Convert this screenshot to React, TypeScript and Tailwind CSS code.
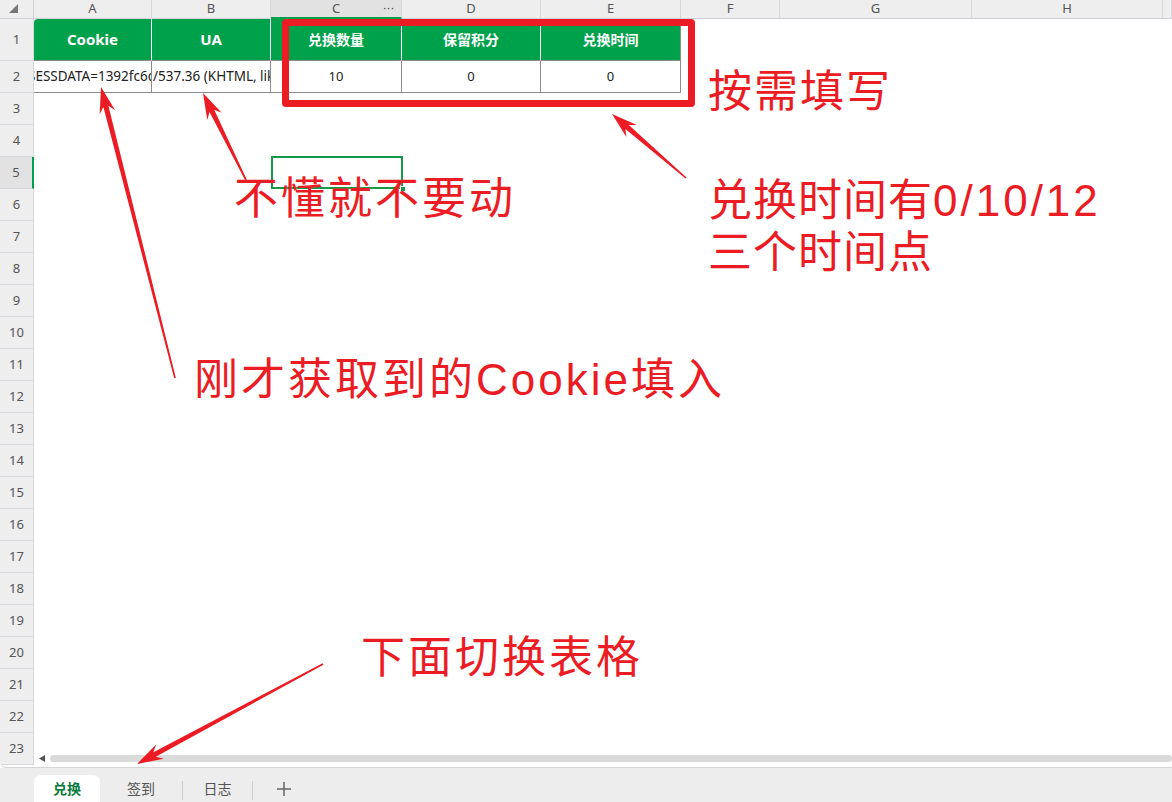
import React from 'react';

const RED = '#ec1c24';

const cols = [
  { k: 'A', w: 118 },
  { k: 'B', w: 119 },
  { k: 'C', w: 131 },
  { k: 'D', w: 139 },
  { k: 'E', w: 140 },
  { k: 'F', w: 99 },
  { k: 'G', w: 192 },
  { k: 'H', w: 191 },
  { k: '', w: 9 },
];

const rows = Array.from({ length: 23 }, (_, i) => i + 1);

const headerRow = ['Cookie', 'UA', '兑换数量', '保留积分', '兑换时间'];

// 箭头：尾部细，头部粗，再加一个三角箭头
function arrowPoints(x1: number, y1: number, x2: number, y2: number) {
  const dx = x2 - x1;
  const dy = y2 - y1;
  const len = Math.hypot(dx, dy);
  const ux = dx / len;
  const uy = dy / len;
  const px = -uy;
  const py = ux;
  const head = 26;
  const bx = x2 - ux * head;
  const by = y2 - uy * head;
  const nx = x2 - ux * (head - 6);
  const ny = y2 - uy * (head - 6);
  const w0 = 0.8;
  const w1 = 2.6;
  const hw = 8;
  const pts: [number, number][] = [
    [x1 + px * w0, y1 + py * w0],
    [nx + px * w1, ny + py * w1],
    [bx + px * hw, by + py * hw],
    [x2, y2],
    [bx - px * hw, by - py * hw],
    [nx - px * w1, ny - py * w1],
    [x1 - px * w0, y1 - py * w0],
  ];
  return pts.map((p) => p.map((v) => v.toFixed(1)).join(',')).join(' ');
}

function HeaderCell({ k }: { k: string }) {
  const selected = k === 'C';
  return (
    <div
      className={
        'relative flex items-center justify-center border-r border-r-[#d9d9dd] text-[13px] text-[#555] ' +
        (selected ? 'bg-[#e2e2e2] border-b-2 border-b-[#00a14b]' : 'bg-[#eeeeee] border-b border-b-[#cfd1d6]')
      }
    >
      {k}
      {selected && (
        <span className="absolute right-[6px] top-[2px] text-[11px] leading-[12px] tracking-[1px] text-[#444]">···</span>
      )}
    </div>
  );
}

function RowHeader({ r }: { r: number }) {
  const selected = r === 5;
  return (
    <div
      className={
        'flex items-center justify-center border-b border-b-[#d6d8de] text-[13px] text-[#555] ' +
        (selected ? 'bg-[#e2e2e2] border-r-2 border-r-[#00a14b]' : 'bg-[#eeeeee] border-r border-r-[#d6d8de]')
      }
    >
      {r}
    </div>
  );
}

function Cell({ r, c }: { r: number; c: number }) {
  if (r === 1 && c < 5) {
    const cjk = c >= 2;
    return (
      <div
        className={
          'flex items-center justify-center bg-[#00a14b] font-bold text-white border-b border-b-[#8c8c8c] ' +
          (c < 4 ? 'border-r border-r-white ' : 'border-r border-r-[#8c8c8c] ') +
          (c === 0 ? 'rounded-tl-[4px] ' : '') +
          (cjk ? 'text-[14px]' : 'text-[15px]')
        }
      >
        {headerRow[c]}
      </div>
    );
  }
  if (r === 2 && c < 2) {
    // 超长内容，被单元格裁掉
    return (
      <div className="flex items-center justify-start overflow-hidden whitespace-nowrap border-b border-r border-[#8c8c8c] bg-white text-[13.5px] text-[#222]">
        {c === 0 && <span className="ml-[-6px] shrink-0">SESSDATA=1392fc6d</span>}
        {c === 1 && <span className="ml-[1px] shrink-0">/537.36 (KHTML, like Gecko)</span>}
      </div>
    );
  }
  if (r === 2 && c < 5) {
    return (
      <div className="flex items-center justify-center border-b border-r border-[#8c8c8c] bg-white text-[13px] text-[#222]">
        {c === 2 ? '10' : '0'}
      </div>
    );
  }
  return <div className="bg-white" />;
}

export default function App() {
  return (
    <div
      className="relative flex h-[802px] w-[1172px] flex-col overflow-hidden bg-white"
      style={{ fontFamily: '"Noto Sans", "Noto Sans CJK SC", sans-serif' }}
    >
      {/* 表格区 */}
      <div className="relative h-[768px] overflow-hidden rounded-bl-[6px] border-b border-b-[#d6d6d6]">
        <div className="grid grid-cols-[34px_118px_119px_131px_139px_140px_99px_192px_191px_1fr] grid-rows-[19px_42px_repeat(22,32px)]">
          <div className="relative border-b border-r border-[#cfd1d6] bg-[#eeeeee]">
            <svg className="absolute left-[9px] top-[4px]" width="9" height="9" viewBox="0 0 9 9">
              <path d="M9 0 L9 9 L0 9 Z" fill="#777" />
            </svg>
          </div>
          {cols.map((c) => (
            <HeaderCell key={c.k || 'I'} k={c.k} />
          ))}
          {rows.map((r) => (
            <React.Fragment key={r}>
              <RowHeader r={r} />
              {cols.map((_, ci) => (
                <Cell key={ci} r={r} c={ci} />
              ))}
            </React.Fragment>
          ))}
        </div>

        {/* 选中单元格 C5 */}
        <div className="absolute left-[271px] top-[156px] h-[33px] w-[132px] border-2 border-[#14994a]" />
        <div className="absolute left-[400px] top-[186px] h-[6px] w-[6px] border border-white bg-[#14994a]" />

        {/* 横向滚动条 */}
        <div className="absolute bottom-[3px] left-[34px] right-0 flex h-[12px] items-center bg-white">
          <svg className="ml-[5px]" width="6" height="7" viewBox="0 0 6 7">
            <path d="M6 0 L6 7 L0 3.5 Z" fill="#555" />
          </svg>
          <div className="ml-[5px] h-[7px] flex-1 rounded-full bg-[#dadada]" />
        </div>
      </div>

      {/* 工作表标签 */}
      <div className="flex h-[34px] items-end bg-[#ededed] pl-[34px] text-[14px]">
        <div className="flex h-[27px] w-[66px] items-center justify-center rounded-t-[7px] bg-white font-bold text-[#0a7a3c]">
          兑换
        </div>
        <div className="flex h-[27px] w-[82px] items-center justify-center text-[#555]">签到</div>
        <div className="mb-[2px] h-[19px] w-px bg-[#cfcfcf]" />
        <div className="flex h-[27px] w-[69px] items-center justify-center text-[#555]">日志</div>
        <div className="mb-[2px] h-[19px] w-px bg-[#cfcfcf]" />
        <div className="flex h-[27px] w-[62px] items-center justify-center">
          <svg width="16" height="16" viewBox="0 0 16 16">
            <path d="M8 1 V15 M1 8 H15" stroke="#666" strokeWidth="1.5" />
          </svg>
        </div>
      </div>

      {/* 标注 */}
      <div className="pointer-events-none absolute inset-0">
        <div className="absolute left-[282px] top-[19px] h-[88px] w-[413px] rounded-[4px] border-[7px] border-[#ec1c24]" />
        <svg className="absolute inset-0" width="1172" height="802" viewBox="0 0 1172 802">
          <polygon points={arrowPoints(175, 378, 101, 87)} fill={RED} />
          <polygon points={arrowPoints(246, 180, 203, 93)} fill={RED} />
          <polygon points={arrowPoints(686, 178, 612, 114)} fill={RED} />
          <polygon points={arrowPoints(323, 664, 137, 764)} fill={RED} />
        </svg>
        <div
          className="absolute text-[44px] leading-none text-[#ec1c24]"
          style={{ fontFamily: '"Liberation Sans", "Noto Sans CJK SC", sans-serif' }}
        >
          <div className="absolute left-[708px] top-[70px] whitespace-nowrap tracking-[2px]">按需填写</div>
          <div className="absolute left-[708px] top-[175px] whitespace-nowrap tracking-[1px] leading-[52px]">
            兑换时间有<span className="tracking-[3px]">0/10/12</span>
            <br />
            三个时间点
          </div>
          <div className="absolute left-[234px] top-[177px] whitespace-nowrap tracking-[3px]">不懂就不要动</div>
          <div className="absolute left-[194px] top-[358px] whitespace-nowrap tracking-[3px]">刚才获取到的Cookie填入</div>
          <div className="absolute left-[361px] top-[636px] whitespace-nowrap tracking-[3px]">下面切换表格</div>
        </div>
      </div>
    </div>
  );
}
